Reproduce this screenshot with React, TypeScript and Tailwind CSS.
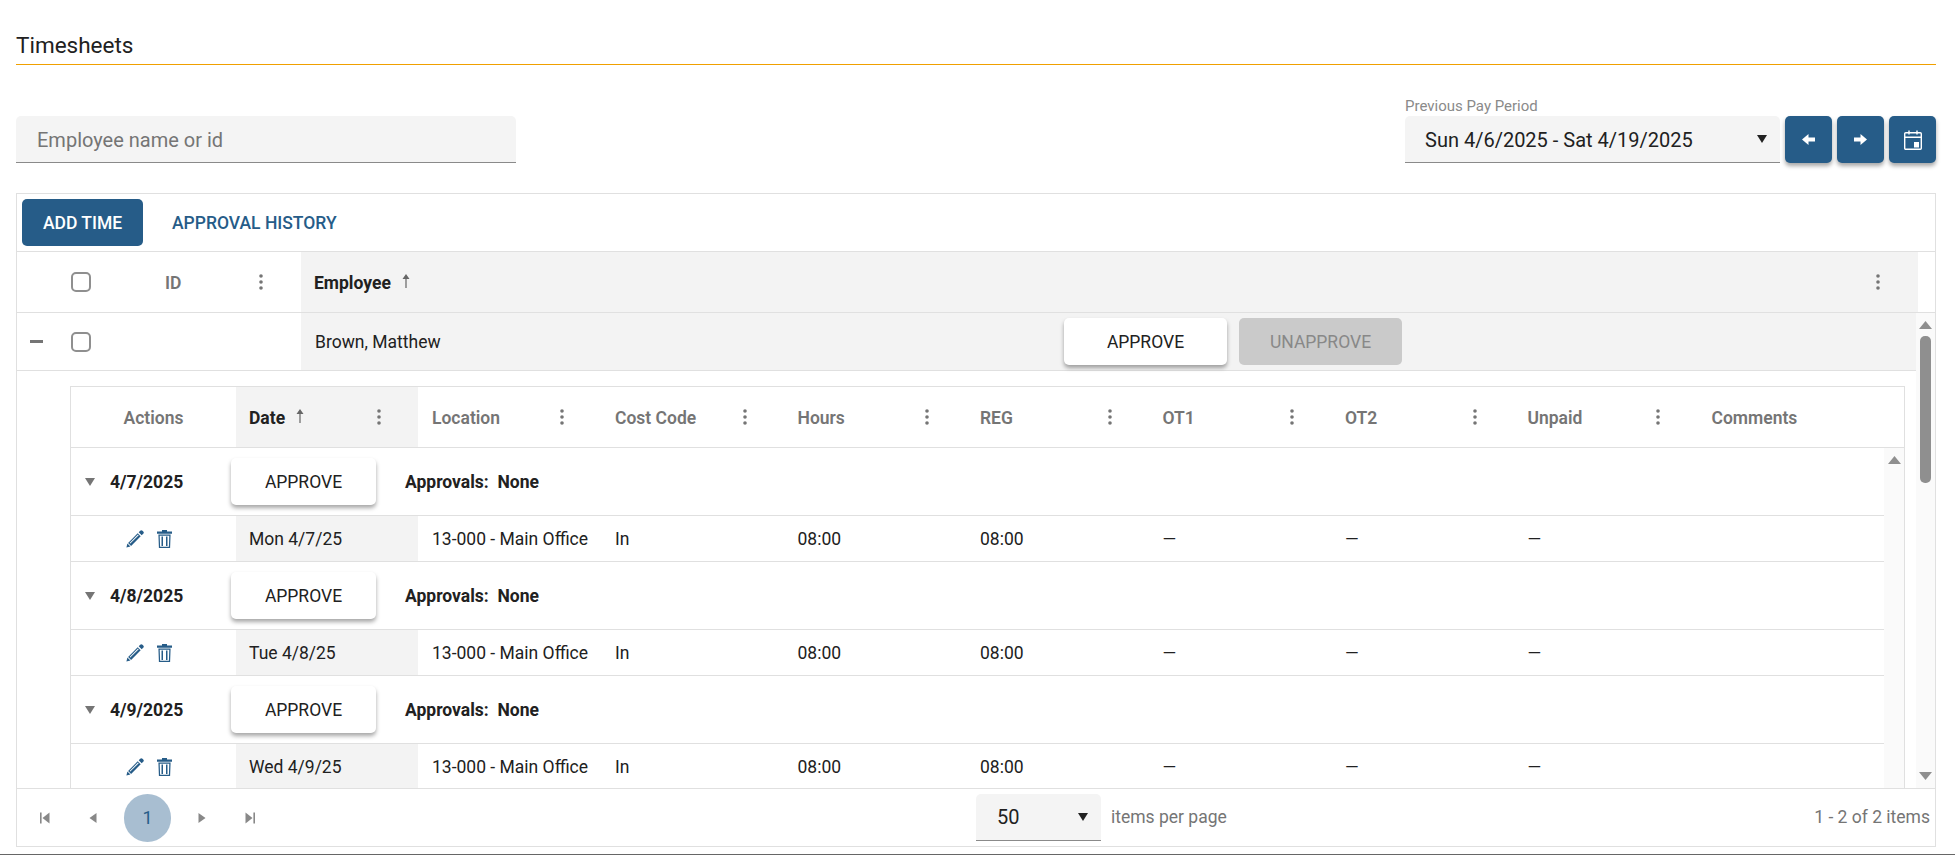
const primary = 'text-[#265c88]';

function Kebab() {
  return (
    <svg width="4" height="16" viewBox="0 0 4 16" className="shrink-0 fill-[#757575]">
      <circle cx="2" cy="2" r="1.8" />
      <circle cx="2" cy="8" r="1.8" />
      <circle cx="2" cy="14" r="1.8" />
    </svg>
  );
}

function SortUp() {
  return (
    <svg width="10" height="16" viewBox="0 0 10 16" className="-mt-[4px] fill-[#666]">
      <path d="M5 1 8.5 6H5.6v9H4.4V6H1.5z" />
    </svg>
  );
}

function Caret({ className = 'fill-[#212121]' }: { className?: string }) {
  return (
    <svg width="10" height="8" viewBox="0 0 10 8" className={className}>
      <path d="M0 0h10L5 8z" />
    </svg>
  );
}

function Pencil() {
  return (
    <svg width="18" height="18" viewBox="0 0 18 18" className="fill-[#265c88]">
      <path d="M14.2.8a1.6 1.6 0 0 1 2.3 0l.7.7a1.6 1.6 0 0 1 0 2.3l-1.5 1.5-3-3zM11.7 3.3l3 3-9.6 9.6-3-3zM1.4 13.6l3 3-4 1z" />
      <path d="M3.6 12.9 12 4.5l.7.7-8.4 8.4z" className="fill-white" />
    </svg>
  );
}

function Trash() {
  return (
    <svg width="15" height="18" viewBox="0 0 15 18" className="fill-[#265c88]">
      <path d="M5 0h5v1.6h5v2.2H0V1.6h5z" />
      <path d="M1.4 4.6h12.2l-.5 13.4H1.9zm1.3 1.2.4 11h8.8l.4-11z" />
      <rect x="4.5" y="6.5" width="1.5" height="9.5" />
      <rect x="9" y="6.5" width="1.5" height="9.5" />
    </svg>
  );
}

function ArrowIcon({ dir }: { dir: 'left' | 'right' }) {
  return (
    <svg width="13" height="11" viewBox="0 0 13 11" className={`fill-white ${dir === 'right' ? 'rotate-180' : ''}`}>
      <path d="M6.5 0v3.5H13v4H6.5V11L0 5.5z" />
    </svg>
  );
}

function CalendarIcon() {
  return (
    <svg width="18" height="20" viewBox="0 0 18 20" fill="none" className="stroke-white">
      <rect x="0.7" y="2.7" width="16.6" height="16.6" rx="1" strokeWidth="1.4" />
      <path d="M0.7 7.2h16.6M5 0.5v4M13 0.5v4" strokeWidth="1.4" />
      <rect x="10" y="12" width="5" height="5.5" className="fill-white" strokeWidth="0" />
    </svg>
  );
}

function Checkbox() {
  return <span className="block h-5 w-5 rounded-[5px] border-2 border-[#8f8f8f] bg-white" />;
}

function ApproveButton({ wide }: { wide?: boolean }) {
  return (
    <button
      type="button"
      className={`h-[47px] rounded-[5px] bg-white pt-[2px] text-[17.5px] text-[#212121] shadow-[0_3px_4px_rgba(0,0,0,0.35)] ${wide ? 'w-[163px]' : 'w-[145px]'}`}
    >
      APPROVE
    </button>
  );
}

function Pager({ dir, edge }: { dir: 'left' | 'right'; edge?: boolean }) {
  return (
    <svg width="12" height="12" viewBox="0 0 12 12" className={`fill-[#888] ${dir === 'right' ? 'rotate-180' : ''}`}>
      {edge && <rect x="1" y="0.5" width="1.6" height="11" />}
      <path d={edge ? 'M10.5 .5v11L3.5 6z' : 'M9.5 1v10L2.5 6z'} />
    </svg>
  );
}

const columns = ['Location', 'Cost Code', 'Hours', 'REG', 'OT1', 'OT2', 'Unpaid'];

const days = [
  { date: '4/7/2025', label: 'Mon 4/7/25' },
  { date: '4/8/2025', label: 'Tue 4/8/25' },
  { date: '4/9/2025', label: 'Wed 4/9/25' },
];

const gridCols = 'grid-cols-[165px_182px_183px_182.5px_182.5px_182.5px_182.5px_182.5px_183px_188px]';

function DayGroup({ date, label }: { date: string; label: string }) {
  return (
    <>
      <div className="flex h-[68px] shrink-0 items-center border-b border-[#e0e0e0]">
        <span className="ml-[14px] mr-[15px]">
          <Caret className="fill-[#757575]" />
        </span>
        <span className="w-[121px] pt-[2px] font-bold">{date}</span>
        <ApproveButton />
        <span className="ml-[29px] whitespace-pre pt-[2px] font-bold">{'Approvals:  None'}</span>
      </div>
      <div className={`grid h-[46px] shrink-0 items-center border-b border-[#e0e0e0] ${gridCols}`}>
        <div className="flex items-center justify-center gap-[13px] pr-[10px]">
          <Pencil />
          <Trash />
        </div>
        <div className="flex h-full items-center bg-[#f3f3f3] pl-[13px] pt-[2px]">{label}</div>
        <div className="pl-[14px] pt-[2px]">13-000 - Main Office</div>
        <div className="pl-[14px] pt-[2px]">In</div>
        <div className="pl-[14px] pt-[2px]">08:00</div>
        <div className="pl-[14px] pt-[2px]">08:00</div>
        <div className="pl-[14px] pt-[2px]">—</div>
        <div className="pl-[14px] pt-[2px]">—</div>
        <div className="pl-[14px] pt-[2px]">—</div>
        <div />
      </div>
    </>
  );
}

export default function App() {
  return (
    <div className="flex h-[855px] w-full flex-col overflow-hidden border-b border-[#666] bg-white pl-4 pr-[19px] font-['Roboto',sans-serif] text-[17.5px] text-[#212121]">
      <h1 className="mt-[30px] border-b border-[#f0a000] pb-[4px] text-[22.5px] leading-[30px] text-[#212121]">Timesheets</h1>

      <div className="mt-[31px] flex h-[67px] items-end justify-between">
        <div className="flex h-[47px] w-[500px] items-center rounded-t-[5px] border-b border-[#8a8a8a] bg-[#f4f4f4] pl-[21px] pt-[2px] text-[20px] text-[#757575]">
          Employee name or id
        </div>
        <div className="flex items-end gap-[5px]">
          <div className="flex flex-col">
            <span className="h-5 text-[15px] leading-[20px] text-[#8a8a8a]">Previous Pay Period</span>
            <div className="flex h-[47px] w-[375px] items-center justify-between rounded-t-[5px] border-b border-[#8a8a8a] bg-[#f4f4f4] pl-5 pr-[13px] text-[20px]">
              <span className="pt-[2px]">Sun 4/6/2025 - Sat 4/19/2025</span>
              <Caret />
            </div>
          </div>
          {(['left', 'right'] as const).map((d) => (
            <button
              key={d}
              type="button"
              className="flex h-[47px] w-[47px] items-center justify-center rounded-[5px] bg-[#265c88] shadow-[0_3px_4px_rgba(0,0,0,0.35)]"
            >
              <ArrowIcon dir={d} />
            </button>
          ))}
          <button
            type="button"
            className="flex h-[47px] w-[47px] items-center justify-center rounded-[5px] bg-[#265c88] shadow-[0_3px_4px_rgba(0,0,0,0.35)]"
          >
            <CalendarIcon />
          </button>
        </div>
      </div>

      <div className="mt-[30px] flex h-[654px] flex-col overflow-hidden border border-[#e0e0e0]">
        <div className="flex h-[58px] shrink-0 items-center border-b border-[#e0e0e0] pb-px pl-[5px]">
          <button type="button" className="h-[47px] w-[121px] rounded-[5px] bg-[#265c88] pt-[2px] text-[17.5px] font-medium text-white">
            ADD TIME
          </button>
          <button type="button" className={`ml-[29px] pt-[2px] text-[17.5px] font-medium ${primary}`}>
            APPROVAL HISTORY
          </button>
        </div>

        <div className="flex h-[61px] shrink-0 items-center border-b border-[#e0e0e0] pr-[17px]">
          <div className="flex h-full w-[284px] shrink-0 items-center">
            <span className="ml-[54px]">
              <Checkbox />
            </span>
            <span className="ml-[74px] w-[16px] pt-[2px] font-semibold text-[#757575]">ID</span>
            <span className="ml-[78px]">
              <Kebab />
            </span>
          </div>
          <div className="flex h-full flex-1 items-center justify-between bg-[#f3f3f3] pl-[13px] pr-[38px]">
            <span className="flex items-center gap-[10px] pt-[2px] font-bold">
              Employee <SortUp />
            </span>
            <Kebab />
          </div>
        </div>

        <div className="flex min-h-0 flex-1">
          <div className="flex min-w-0 flex-1 flex-col">
            <div className="flex h-[58px] shrink-0 items-center border-b border-[#e0e0e0]">
              <div className="flex h-full w-[284px] shrink-0 items-center">
                <span className="ml-[13px] h-[3px] w-[13px] bg-[#757575]" />
                <span className="ml-[28px]">
                  <Checkbox />
                </span>
              </div>
              <div className="flex h-full flex-1 items-center bg-[#f3f3f3] pl-[14px]">
                <span className="w-[749px] pt-[2px]">Brown, Matthew</span>
                <ApproveButton wide />
                <span className="ml-[12px] flex h-[47px] w-[163px] items-center justify-center rounded-[5px] bg-[#cacaca] pt-[2px] text-[#888]">
                  UNAPPROVE
                </span>
              </div>
            </div>

            <div className="ml-[53px] mr-[11px] mt-[15px] flex min-h-0 flex-1 flex-col border-x border-t border-[#e0e0e0]">
              <div className={`grid h-[61px] shrink-0 items-center border-b border-[#e0e0e0] font-semibold text-[#757575] ${gridCols}`}>
                <div className="pt-[2px] text-center">Actions</div>
                <div className="flex h-full items-center justify-between bg-[#f3f3f3] pl-[13px] pr-[37px] font-bold text-[#212121]">
                  <span className="flex items-center gap-[10px] pt-[2px]">
                    Date <SortUp />
                  </span>
                  <Kebab />
                </div>
                {columns.map((c) => (
                  <div key={c} className="flex items-center justify-between pl-[14px] pr-[37px]">
                    <span className="pt-[2px]">{c}</span>
                    <Kebab />
                  </div>
                ))}
                <div className="pl-[15px] pt-[2px]">Comments</div>
              </div>

              <div className="flex min-h-0 flex-1">
                <div className="min-w-0 flex-1 overflow-hidden">
                  {days.map((d) => (
                    <DayGroup key={d.date} date={d.date} label={d.label} />
                  ))}
                </div>
                <div className="flex w-5 shrink-0 flex-col items-center bg-[#fafafa] pt-[8px]">
                  <svg width="13" height="8" viewBox="0 0 13 8" className="fill-[#8f8f8f]">
                    <path d="M6.5 0 13 8H0z" />
                  </svg>
                </div>
              </div>
            </div>
          </div>

          <div className="flex w-[19px] shrink-0 flex-col items-center bg-[#fafafa] pb-[8px] pt-[8px]">
            <svg width="13" height="8" viewBox="0 0 13 8" className="fill-[#8f8f8f]">
              <path d="M6.5 0 13 8H0z" />
            </svg>
            <div className="mt-[7px] h-[147px] w-[11px] rounded-[5px] bg-[#8f8f8f]" />
            <svg width="13" height="8" viewBox="0 0 13 8" className="mt-auto rotate-180 fill-[#8f8f8f]">
              <path d="M6.5 0 13 8H0z" />
            </svg>
          </div>
        </div>

        <div className="flex h-[58px] shrink-0 items-center border-t border-[#e0e0e0] pr-[5px] text-[#757575]">
          <div className="flex w-[959px] shrink-0 items-center">
            <span className="ml-[22px]">
              <Pager dir="left" edge />
            </span>
            <span className="ml-[36px]">
              <Pager dir="left" />
            </span>
            <span className="ml-[25px] flex h-[48px] w-[47px] items-center justify-center rounded-full bg-[#a8bed1] text-[18px] text-[#265c88]">1</span>
            <span className="ml-[25px]">
              <Pager dir="right" />
            </span>
            <span className="ml-[36px]">
              <Pager dir="right" edge />
            </span>
          </div>
          <div className="flex h-[47px] w-[125px] items-center justify-between rounded-t-[5px] border-b border-[#8a8a8a] bg-[#f4f4f4] pl-[21px] pr-[13px] text-[20px] text-[#212121]">
            50
            <Caret />
          </div>
          <span className="ml-[10px]">items per page</span>
          <span className="ml-auto">1 - 2 of 2 items</span>
        </div>
      </div>
    </div>
  );
}
